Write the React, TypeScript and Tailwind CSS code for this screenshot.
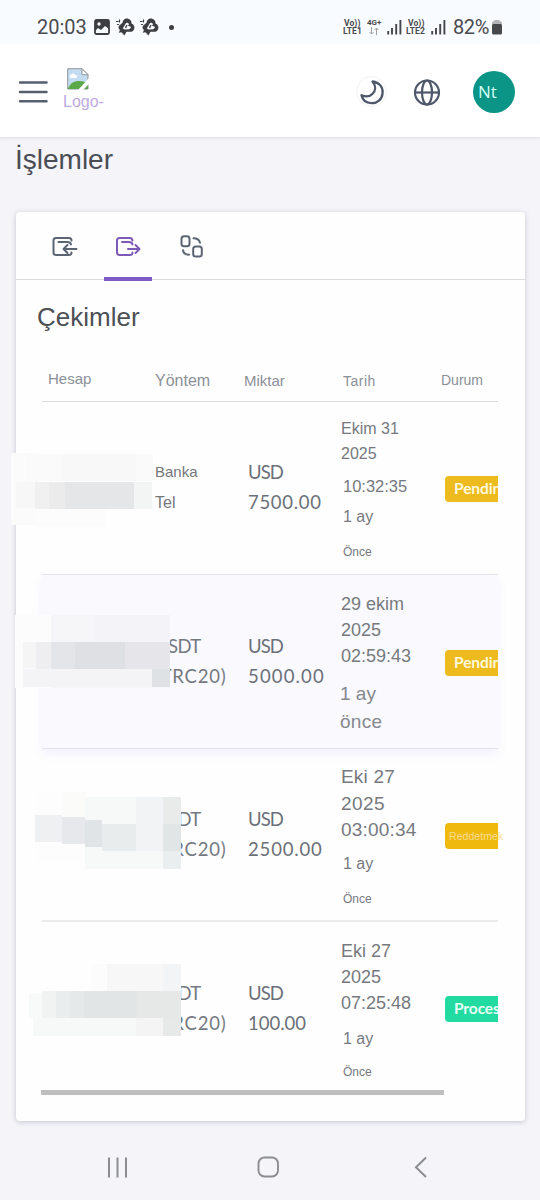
import type { ReactNode } from "react";

type Block = [x: number, y: number, w: number, h: number, fill: string];

function Signal() {
  return (
    <svg width="15" height="16" viewBox="0 0 15 16" stroke="#47484c" strokeWidth="1.9">
      <path d="M1.2 12v3.5M5 9v6.5M9.2 5v10.5M13.4 1v14.5" />
    </svg>
  );
}

function Spade() {
  return (
    <svg width="19" height="19" viewBox="0 0 19 19">
      <path d="M10.500.500c3.500 0 5.200 2.400 5 5 2.200.8 3.300 2.600 2.800 5-.5 2.300-2.500 3.700-5 3.300h-2.800l-2.200 3.700-2.800-3.200-2.700.500 1.200-3C2 11 2 7.500 4.500 6.500L6.500 4.800C6.800 2.200 8.500.500 10.500.500Z" fill="#3d3e41" />
      <path d="M0 3.500h2.500M3.500 1.500v3M1 6.500h2" stroke="#3d3e41" strokeWidth="1.200" />
      <path d="m6.800 10.500 3.200-5.500q2.500-1 3 1.300l-1 1.700q2.500-.5 3 1.500l-1.700 1.800-4.500.2Z" fill="#f8faff" />
      <path d="m9.500 10 1.500-3" stroke="#3d3e41" strokeWidth="1.400" />
    </svg>
  );
}

function StatusBar() {
  return (
    <div className="flex h-[44px] shrink-0 items-center bg-[#f8fbff] pl-[37px] pt-[10px] font-[Roboto,sans-serif] text-[#4a4a4e]">
      <span className="w-[57px] text-[20px] leading-[20px]">20:03</span>
      <svg width="16" height="16" viewBox="0 0 16 16">
        <rect x="1" y="1" width="14" height="14" rx="1.500" fill="none" stroke="#3d3e41" strokeWidth="1.800" />
        <path d="M1 1h14v9l-4-3-4 4-3-2-3 3Z" fill="#3d3e41" />
        <circle cx="5" cy="5" r="1.700" fill="#f8faff" />
      </svg>
      <div className="ml-[6px] flex gap-[5px]">
        <Spade />
        <Spade />
      </div>
      <div className="ml-[10px] size-[5px] rounded-full bg-[#3d3e41]" />
      <div className="ml-[169px] w-[24px] text-[8.500px] font-bold leading-[8px] tracking-[0.1px]">
        <p className="pl-px">Vo))</p>
        <p>LTE1</p>
      </div>
      <div className="w-[20px] text-[8px] font-bold leading-[8px]">
        <p>4G+</p>
        <svg className="ml-[2px]" width="10" height="8" viewBox="0 0 10 8" fill="none" stroke="#a0a1a5">
          <path d="M2.500 0v7M.5 5l2 2 2-2M7.500 8V1M5.500 3l2-2 2 2" />
        </svg>
      </div>
      <Signal />
      <div className="ml-[4px] w-[25px] text-[8.500px] font-bold leading-[8px] tracking-[0.1px]">
        <p className="pl-[2px]">Vo))</p>
        <p>LTE2</p>
      </div>
      <Signal />
      <span className="ml-[7px] w-[38px] text-[20px] leading-[20px] tracking-[-0.4px]">82%</span>
      <svg width="12" height="16" viewBox="0 0 12 16">
        <path d="M1 3.500 4 1h4l3 2.500V6H1Z" fill="#b4b5b9" />
        <rect x="1" y="5" width="10" height="10.500" rx="1.500" fill="#47484c" />
      </svg>
    </div>
  );
}

function Header() {
  return (
    <header className="z-10 flex h-[94px] shrink-0 border-b border-[#e6e6ea] bg-white pl-[18px] pt-[22px] shadow-[0_1px_3px_rgba(0,0,0,0.06)]">
      <svg className="mt-[14px]" width="30" height="24" viewBox="0 0 30 24" stroke="#5a5f70" strokeWidth="2.500" strokeLinecap="round">
        <path d="M2 2.500h26.500M2 12h26.500M2 21.300h26.500" />
      </svg>
      <div className="ml-[15px] w-[60px] pt-[2px]">
        <svg className="ml-[4px]" width="22" height="22" viewBox="0 0 22 22">
          <path d="M.7.700H15l6 6V21H.700Z" fill="#c4dcf2" stroke="#90959a" />
          <path d="M15 .700v6h6Z" fill="#fff" stroke="#90959a" />
          <path d="M4 7c1-2 3-2 4 0 3-.3 3 3 0 3H4C2 10 2 7.500 4 7Z" fill="#fff" />
          <path d="M1 21c2-6 6-8 11-8 4 0 7 1 9 3v5Z" fill="#5aa84a" />
          <path d="M11 22 22 10v6l-6 6Z" fill="#fff" />
        </svg>
        <p className="mt-[2px] text-[16px] leading-[20px] text-[#bda9e2]">Logo-</p>
      </div>
      <div className="ml-[233px] mt-[10px] flex size-[31px] items-center justify-center rounded-full border border-[#f3f3f5]">
        <svg width="28" height="28" viewBox="0 0 28 28" fill="none" stroke="#4d5769" strokeWidth="2.300" strokeLinejoin="round">
          <path d="M14.500 3.500c7 1 10.500 5.700 10.100 11.300C24.200 21.500 19 25.500 13.500 25.100 8.500 24.800 4.500 22 3.500 17.200c4 1.600 8.500 1.300 10.800-1.200C18 12.500 18 7.500 14.500 3.500Z" />
        </svg>
      </div>
      <svg className="ml-[26px] mt-[12px]" width="28" height="28" viewBox="0 0 28 28" fill="none" stroke="#4d5769" strokeWidth="2.200">
        <circle cx="14" cy="14.500" r="12" />
        <ellipse cx="14" cy="14.500" rx="5" ry="12" />
        <path d="M2 14.500h24" />
      </svg>
      <div className="ml-[32px] mt-[5px] h-[42px] w-[42px] rounded-full bg-[#0a9586] pl-[5px] font-['Open_Sans',sans-serif] text-[17px] leading-[42px] text-[#d2fff6]">Nt</div>
    </header>
  );
}

function Tabs() {
  return (
    <nav className="flex h-[68px] border-b border-[#dcdce0] pl-[25px]">
      <button className="flex w-[48px] items-start justify-center pt-[24px]">
        <svg width="26" height="22" viewBox="52.500 236 26 22" fill="none" stroke="#5b6472" strokeWidth="2" strokeLinecap="round" strokeLinejoin="round">
          <path d="M72 240.500q0-2.500-2.500-2.500H56.500q-2.500 0-2.500 2.500V252.500q0 2.500 2.500 2.500H69.500q2.500 0 2.500-2.500M59 242h9q3 0 3.500 2.500M77 249H64M68 245l-4 4 4 4" />
        </svg>
      </button>
      <button className="ml-[15px] flex h-[69px] w-[48px] items-start justify-center border-b-4 border-[#7e5ac8] pt-[24px]">
        <svg width="26" height="22" viewBox="115 236 26 22" fill="none" stroke="#7e5ab8" strokeWidth="2" strokeLinecap="round" strokeLinejoin="round">
          <path d="M132.500 240.500q-.5-2.500-2.500-2.500H119.500q-2.500 0-2.500 2.500V252.500q0 2.500 2.500 2.500H130q2.500 0 2.500-2.500M122 242h7q3 0 3.500 2.500M128 249H139.500M135.500 245l4 4-4 4" />
        </svg>
      </button>
      <button className="ml-[15px] flex w-[49px] items-start justify-center pt-[22px]">
        <svg width="24" height="25" viewBox="180 234 24 25" fill="none" stroke="#5b6472" strokeWidth="2" strokeLinecap="round">
          <rect x="181.500" y="236.300" width="8" height="10" rx="2.500" />
          <rect x="193.200" y="246.500" width="8.600" height="10" rx="2.500" />
          <path d="M193.500 238.300q5.500 0 6.500 4.500M183 250.200q.5 4.500 6 4.500" />
        </svg>
      </button>
    </nav>
  );
}

function Mosaic({ blocks, top }: { blocks: Block[]; top: number }) {
  return (
    <svg className="absolute left-[-42px] top-0 z-10" width="200" height="173" viewBox={`0 ${top} 200 173`} shapeRendering="crispEdges">
      {blocks.map(([x, y, w, h, fill], i) => (
        <rect key={i} x={x} y={y} width={w} height={h} fill={fill} />
      ))}
    </svg>
  );
}

const bank: Block[] = [
  [11, 453, 27, 72, "#fbfbfb"], [26, 454, 127, 27, "#fafafa"], [62, 454, 74, 27, "#f8f8f8"],
  [16, 482, 20, 26, "#f7f7f7"], [35, 482, 15, 27, "#f0f0f1"], [49, 482, 17, 27, "#ebebec"],
  [65, 482, 69, 27, "#e5e6e8"], [134, 482, 18, 27, "#f3f4f4"], [36, 509, 70, 17, "#fcfcfc"],
];
const usdtA: Block[] = [
  [15, 615, 36, 73, "#fcfcfc"], [51, 615, 119, 73, "#f6f6f8"], [94, 615, 76, 27, "#f4f4f8"],
  [23, 642, 13, 26, "#f5f5f6"], [36, 642, 15, 27, "#eeeef0"], [51, 642, 24, 27, "#e4e5e8"],
  [75, 642, 50, 27, "#dfe0e4"], [125, 642, 45, 27, "#e5e5ea"], [23, 669, 129, 18, "#f4f4f6"],
  [152, 669, 18, 18, "#dfe2e5"],
];
const usdtB: Block[] = [
  [35, 792, 50, 70, "#fdfdfd"], [62, 792, 24, 26, "#fbfbfa"], [85, 797, 78, 72, "#f7f8f8"],
  [35, 815, 27, 27, "#eff0f1"], [62, 817, 23, 27, "#e7e8eb"], [85, 820, 17, 27, "#e1e4e6"],
  [102, 824, 34, 27, "#e9ecec"], [136, 797, 27, 54, "#f1f3f4"], [163, 797, 18, 27, "#e9ebea"],
  [163, 824, 18, 27, "#e2e5e6"], [163, 851, 18, 18, "#ebeeee"],
];
const usdtC: Block[] = [
  [91, 964, 16, 27, "#fcfcfc"], [107, 964, 56, 27, "#f7f7f7"], [163, 964, 18, 27, "#f2f4f5"],
  [29, 993, 13, 25, "#f8f9f9"], [42, 991, 14, 27, "#f0f3f2"], [56, 991, 14, 27, "#eaedee"],
  [70, 991, 14, 27, "#e6e9e9"], [84, 991, 53, 27, "#e1e5e6"], [137, 991, 44, 27, "#e6e8e8"],
  [33, 1018, 130, 18, "#f7f8f8"], [136, 1018, 27, 18, "#f3f4f3"], [163, 1018, 18, 18, "#e7e9e9"],
];

function Usdt() {
  return (
    <div className="pb-[2px] font-[Lato,sans-serif] text-[18.500px] leading-[30px] text-[#747981]">
      <p className="tracking-[-0.6px]">USDT</p>
      <p className="tracking-[0.750px]">(TRC20)</p>
    </div>
  );
}

function Row({ children, method, amount, badge, mosaic, className }: {
  children: ReactNode; method: ReactNode; amount: ReactNode; badge: ReactNode; mosaic: ReactNode; className: string;
}) {
  return (
    <div className={`relative grid w-[456px] grid-cols-[113px_93px_93px_104px_53px] ${className}`}>
      <div>{mosaic}</div>
      <div className="self-center">{method}</div>
      <div className="self-center pb-[2px] font-[Lato,sans-serif] text-[18.500px] leading-[30px] text-[#6b7078]">
        <p className="tracking-[-0.900px]">USD</p>
        {amount}
      </div>
      <div className="whitespace-nowrap leading-[20px] text-[#76797e]">{children}</div>
      <div className="self-center pt-[2px]">{badge}</div>
    </div>
  );
}

function Pending() {
  return (
    <div className="h-[26px] overflow-hidden rounded-l-[4px] bg-[#edbb1d] pl-[9px] font-[Lato,sans-serif] text-[15.500px] font-bold leading-[25px] tracking-[-0.100px] text-[#fff8da]">Pending</div>
  );
}

function Table() {
  return (
    <div className="ml-[26px] w-[456px]">
      <div className="grid h-[67px] grid-cols-[107px_89px_99px_98px_63px] border-b border-[#dcdcde] pl-[6px] pt-[34px] leading-[20px] text-[#8b9098]">
        <span className="text-[15px]">Hesap</span>
        <span className="pt-[2px] text-[16px]">Yöntem</span>
        <span className="pt-[2px] text-[15px]">Miktar</span>
        <span className="pt-[2px] text-[14px] tracking-[0.500px]">Tarih</span>
        <span className="pt-[1px] text-[14px]">Durum</span>
      </div>
      <Row
        className="h-[172px]"
        mosaic={<Mosaic blocks={bank} top={402} />}
        method={<div className="pb-[3px] leading-[31px] text-[#74777b]"><p className="text-[15px]">Banka</p><p className="text-[16px]">Tel</p></div>}
        amount={<p className="tracking-[0.700px]">7500.00</p>}
        badge={<Pending />}
      >
        <p className="mt-[17px] text-[16px]">Ekim 31</p>
        <p className="mt-[5px] text-[16px]">2025</p>
        <p className="ml-[2px] mt-[12px] text-[16.500px]">10:32:35</p>
        <p className="ml-[2px] mt-[11px] text-[16px]">1 ay</p>
        <p className="ml-[2px] mt-[15px] text-[12px]">Önce</p>
      </Row>
      <Row
        className="h-[175px] border-y border-[#e3e2ee] bg-[#f9f9fe] shadow-[0_5px_9px_rgba(110,90,240,0.08)]"
        mosaic={<Mosaic blocks={usdtA} top={575} />}
        method={<Usdt />}
        amount={<p className="tracking-[1.150px]">5000.00</p>}
        badge={<Pending />}
      >
        <p className="mt-[19px] text-[18px]">29 ekim</p>
        <p className="mt-[6px] text-[18px]">2025</p>
        <p className="mt-[6px] text-[18px]">02:59:43</p>
        <p className="ml-[-1px] mt-[18px] text-[19px] text-[#85888d]">1 ay</p>
        <p className="ml-[-1px] mt-[8px] text-[19px] tracking-[0.300px] text-[#85888d]">önce</p>
      </Row>
      <Row
        className="h-[173px] border-b-2 border-[#ebebee]"
        mosaic={<Mosaic blocks={usdtB} top={749} />}
        method={<Usdt />}
        amount={<p className="tracking-[0.850px]">2500.00</p>}
        badge={<div className="h-[26px] whitespace-nowrap rounded-l-[4px] bg-[#f0b90e] pl-[4px] text-[10.600px] leading-[27px] text-[#f5dc91]">Reddetmek</div>}
      >
        <p className="mt-[18px] text-[19px] tracking-[0.200px]">Eki 27</p>
        <p className="mt-[7px] text-[19px] tracking-[0.400px]">2025</p>
        <p className="mt-[6px] text-[19px] tracking-[0.200px]">03:00:34</p>
        <p className="ml-[2px] mt-[14px] text-[16px]">1 ay</p>
        <p className="ml-[2px] mt-[15px] text-[12px]">Önce</p>
      </Row>
      <Row
        className="h-[168px]"
        mosaic={<Mosaic blocks={usdtC} top={922} />}
        method={<div className="pt-[6px]"><Usdt /></div>}
        amount={<p className="-mb-[6px]">100.00</p>}
        badge={<div className="mt-[4px] h-[26px] overflow-hidden rounded-l-[4px] bg-[#22dba0] pl-[9px] font-[Lato,sans-serif] text-[15.500px] font-bold leading-[25px] tracking-[-0.100px] text-[#e6fff6]">Processed</div>}
      >
        <p className="mt-[19px] text-[18px]">Eki 27</p>
        <p className="mt-[6px] text-[18px]">2025</p>
        <p className="mt-[6px] text-[18px]">07:25:48</p>
        <p className="ml-[2px] mt-[16px] text-[16px]">1 ay</p>
        <p className="ml-[2px] mt-[13px] text-[12px]">Önce</p>
      </Row>
      <div className="ml-[-1px] h-[5px] w-[403px] bg-[#bebebf]" />
    </div>
  );
}

export default function App() {
  return (
    <div className="flex h-[1200px] w-[540px] flex-col overflow-hidden bg-[#f4f4f9] font-['Liberation_Sans',Arial,sans-serif]">
      <StatusBar />
      <Header />
      <main className="flex grow flex-col pl-[16px]">
        <h1 className="ml-[-1px] h-[74px] pt-[5px] text-[28px] leading-[34px] text-[#4a4d55]">İşlemler</h1>
        <section className="h-[909px] w-[509px] rounded-[4px] bg-[#fefefe] shadow-[0_1px_5px_rgba(60,60,90,0.25)]">
          <Tabs />
          <h2 className="ml-[21px] h-[55px] pt-[21px] text-[26px] leading-[32px] text-[#4c4f54]">Çekimler</h2>
          <Table />
        </section>
      </main>
      <footer className="flex h-[79px] shrink-0 pl-[107px] pt-[35px]">
        <svg width="21" height="22" viewBox="0 0 21 22" stroke="#8c8d93" strokeWidth="2">
          <path d="M2 1.500v20M10.500 1.500v20M19 1.500v20" />
        </svg>
        <svg className="ml-[129px]" width="23" height="22" viewBox="0 0 23 22" fill="none" stroke="#8c8d93" strokeWidth="1.900">
          <rect x="1.500" y="1.500" width="19.500" height="19" rx="6" />
        </svg>
        <svg className="ml-[133px]" width="16" height="22" viewBox="0 0 16 22" fill="none" stroke="#8c8d93" strokeWidth="2">
          <path d="M13 1.500 3 11.300l10 9.700" />
        </svg>
      </footer>
    </div>
  );
}
